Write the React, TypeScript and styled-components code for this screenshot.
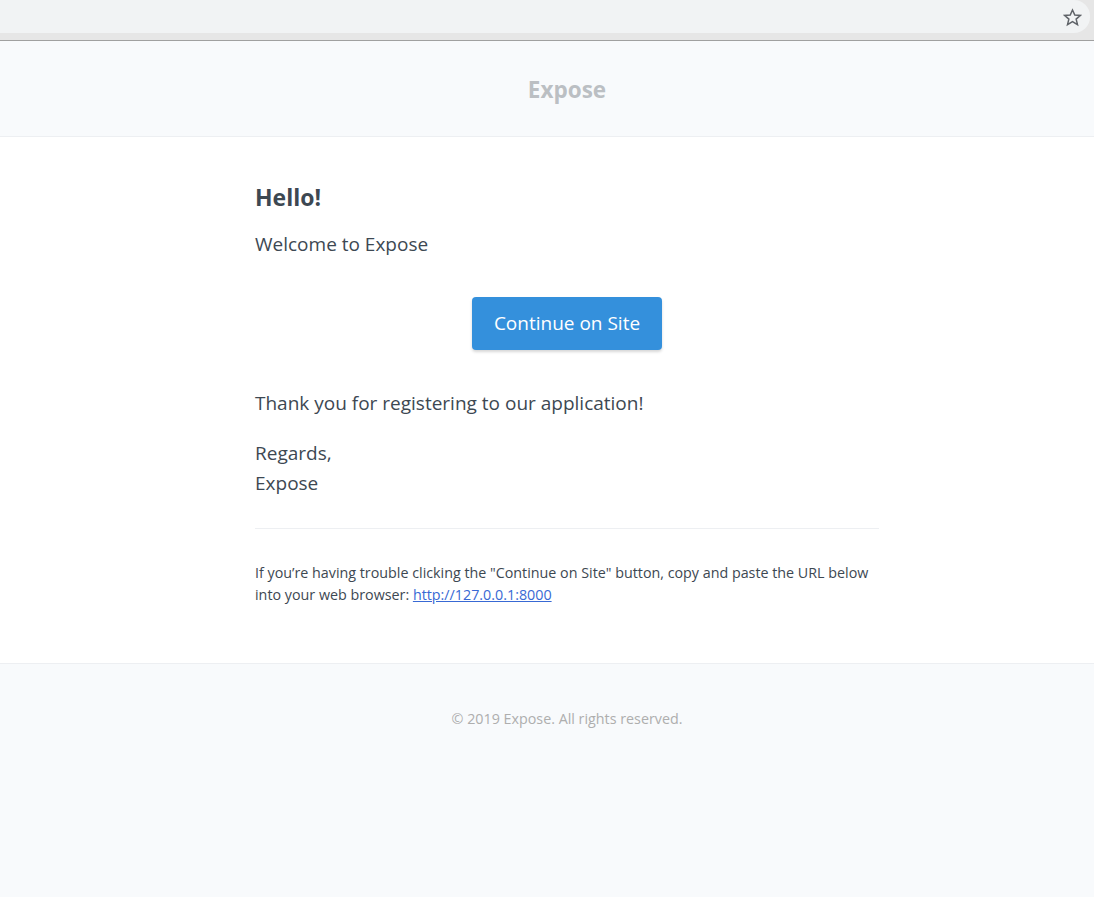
import React from "react";
import styled, { createGlobalStyle } from "styled-components";

const GlobalStyle = createGlobalStyle`
  html, body {
    margin: 0;
    padding: 0;
  }
  body {
    background: #f8fafc;
    font-family: "Open Sans", "Noto Sans", sans-serif;
    color: #3d4852;
  }
  * {
    box-sizing: border-box;
  }
`;

const Toolbar = styled.div`
  height: 41px;
  background: #e6e6e6;
  border-bottom: 1px solid #a0a0a0;
`;

const Omnibox = styled.div`
  height: 33px;
  margin-right: 4px;
  background: #f1f3f4;
  border-radius: 0 16px 16px 0;
  display: flex;
  align-items: center;
  justify-content: flex-end;
  padding-right: 8px;
`;

const StarIcon = styled.svg`
  width: 19px;
  height: 19px;
  display: block;
  margin-top: 1px;
`;

const Header = styled.header`
  background: #f8fafc;
  border-bottom: 1px solid #edeff2;
  padding: 34px 0 31px 40px;
  text-align: center;
`;

const Brand = styled.a`
  font-size: 22.5px;
  line-height: 30px;
  font-weight: 700;
  color: #bbbfc3;
  text-decoration: none;
`;

const BodySection = styled.main`
  background: #ffffff;
  border-bottom: 1px solid #edeff2;
  padding-left: 40px;
`;

const Inner = styled.div`
  width: 624px;
  margin: 0 auto;
  padding: 45px 0 57px;
`;

const Heading = styled.h1`
  margin: 0 0 17px;
  font-size: 23px;
  line-height: 30px;
  font-weight: 700;
  color: #3d4852;
`;

const Para = styled.p<{ $gap?: number }>`
  margin: ${(p) => p.$gap ?? 0}px 0 0;
  font-size: 19px;
  line-height: 30px;
  color: #3d4852;
`;

const ButtonRow = styled.div`
  margin-top: 38px;
  display: flex;
  justify-content: center;
`;

const ActionButton = styled.a`
  display: inline-block;
  background: #3490dc;
  color: #ffffff;
  font-size: 19px;
  line-height: 29px;
  padding: 12px 22px;
  border-radius: 4px;
  box-shadow: 0 2px 3px rgba(0, 0, 0, 0.16);
  text-decoration: none;
`;

const Divider = styled.hr`
  margin: 30px 0 0;
  border: none;
  border-top: 1px solid #edeff2;
  height: 0;
`;

const Subcopy = styled.p`
  margin: 0;
  padding-top: 33px;
  font-size: 14.3px;
  line-height: 22px;
  color: #3d4852;
`;

const Link = styled.a`
  color: #3869d4;
  text-decoration: underline;
`;

const Footer = styled.footer`
  background: #f8fafc;
  padding: 44px 0 40px 40px;
  text-align: center;
`;

const FooterText = styled.p`
  margin: 0;
  font-size: 14.3px;
  line-height: 22px;
  color: #aeaeae;
`;

export default function App() {
  return (
    <>
      <GlobalStyle />
      <Toolbar>
        <Omnibox>
          <StarIcon viewBox="0 0 24 24" fill="none" stroke="#5f6368" strokeWidth="1.9" strokeLinejoin="miter">
            <polygon points="12,2.5 14.9,9 22,9.4 16.6,14 18.3,21 12,17.3 5.7,21 7.4,14 2,9.4 9.1,9" />
          </StarIcon>
        </Omnibox>
      </Toolbar>
      <Header>
        <Brand href="#">Expose</Brand>
      </Header>
      <BodySection>
        <Inner>
          <Heading>Hello!</Heading>
          <Para>Welcome to Expose</Para>
          <ButtonRow>
            <ActionButton href="#">Continue on Site</ActionButton>
          </ButtonRow>
          <Para $gap={38}>Thank you for registering to our application!</Para>
          <Para $gap={20}>
            Regards,
            <br />
            Expose
          </Para>
          <Divider />
          <Subcopy>
            If you’re having trouble clicking the "Continue on Site" button, copy and paste the URL below into your web
            browser: <Link href="#">http://127.0.0.1:8000</Link>
          </Subcopy>
        </Inner>
      </BodySection>
      <Footer>
        <FooterText>© 2019 Expose. All rights reserved.</FooterText>
      </Footer>
    </>
  );
}
